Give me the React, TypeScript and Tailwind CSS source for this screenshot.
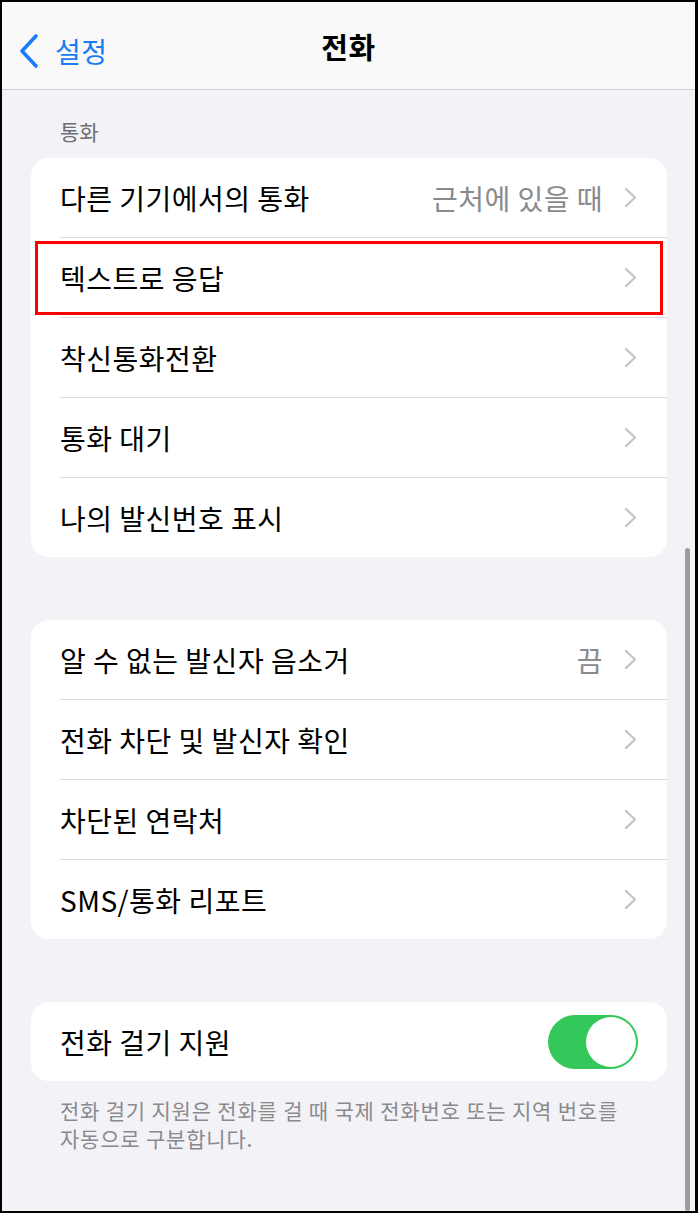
import React from 'react';

type Row = { label: string; value?: string };

const groupOne: Row[] = [
  { label: '다른 기기에서의 통화', value: '근처에 있을 때' },
  { label: '텍스트로 응답' },
  { label: '착신통화전환' },
  { label: '통화 대기' },
  { label: '나의 발신번호 표시' },
];

const groupTwo: Row[] = [
  { label: '알 수 없는 발신자 음소거', value: '끔' },
  { label: '전화 차단 및 발신자 확인' },
  { label: '차단된 연락처' },
  { label: 'SMS/통화 리포트' },
];

const font = { fontFamily: '"Noto Sans CJK KR", "Noto Sans", sans-serif' };

const Chevron = () => (
  <svg width="13" height="21" viewBox="0 0 13 21" fill="none" className="shrink-0">
    <path d="M2 2l9 8.5L2 19" stroke="#c4c4c7" strokeWidth="2.4" strokeLinecap="round" strokeLinejoin="round" />
  </svg>
);

const SettingsRow: React.FC<{ row: Row; last: boolean; highlight?: boolean }> = ({ row, last, highlight }) => (
  <div className={`relative pl-[29px] ${last ? 'h-[79px]' : 'h-[80px]'}`}>
    <div className={`flex h-full items-center pr-[30px] ${last ? '' : 'border-b border-[#dcdce0]'}`}>
      <span className="flex-1 text-[28px] tracking-[0.5px] text-black">{row.label}</span>
      {row.value && <span className="mr-[21px] text-[28px] tracking-[0.5px] text-[#8a8a8e]">{row.value}</span>}
      <Chevron />
    </div>
    {highlight && (
      <div className="absolute left-[4px] right-[4px] top-[3px] bottom-[3px] border-[3px] border-[#ff0000]" />
    )}
  </div>
);

const Group: React.FC<{ rows: Row[]; highlightIndex?: number }> = ({ rows, highlightIndex }) => (
  <div className="ml-[29px] mr-[28px] overflow-hidden rounded-[18px] bg-white">
    {rows.map((r, i) => (
      <SettingsRow key={r.label} row={r} last={i === rows.length - 1} highlight={i === highlightIndex} />
    ))}
  </div>
);

export default function App() {
  return (
    <div
      className="relative box-border h-[1213px] w-[698px] overflow-hidden border-b-2 border-l-2 border-r-[3px] border-t-2 border-black bg-[#f2f2f7]"
      style={font}
    >
      <header className="relative flex h-[88px] items-center border-b border-[#d2d2d6] bg-[#f9f9f9]">
        <div className="absolute left-[16px] top-[31px] flex items-center">
          <svg width="22" height="36" viewBox="0 0 22 36" fill="none">
            <path d="M18 3L4 18l14 15" stroke="#1a7cf5" strokeWidth="3.6" strokeLinecap="round" strokeLinejoin="round" />
          </svg>
          <span className="ml-[15px] text-[28px] leading-none tracking-[0.5px] text-[#1a7cf5]">설정</span>
        </div>
        <h1 className="w-full pt-[2px] text-center text-[29px] font-bold tracking-[0.5px] text-black">전화</h1>
      </header>

      <div className="pl-[58px] pt-[29px] pb-[15px] text-[21px] leading-[24px] text-[#6d6d72]">통화</div>
      <Group rows={groupOne} highlightIndex={1} />

      <div className="h-[63px]" />
      <Group rows={groupTwo} />

      <div className="h-[63px]" />
      <div className="ml-[29px] mr-[28px] flex h-[79px] items-center rounded-[18px] bg-white pl-[29px] pr-[29px]">
        <span className="flex-1 text-[28px] tracking-[0.5px] text-black">전화 걸기 지원</span>
        <div className="flex h-[54px] w-[90px] items-center justify-end rounded-full bg-[#34c759] p-[2px]">
          <div className="h-[50px] w-[50px] rounded-full bg-white" />
        </div>
      </div>
      <p className="mt-[15px] pl-[58px] pr-[20px] text-[21px] leading-[28px] tracking-[0.8px] text-[#8a8a8e]">
        전화 걸기 지원은 전화를 걸 때 국제 전화번호 또는 지역 번호를
        <br />
        자동으로 구분합니다.
      </p>

      <div className="absolute right-[5px] top-[546px] bottom-0 w-[5px] rounded-full bg-[#9c9ca0]" />
    </div>
  );
}
